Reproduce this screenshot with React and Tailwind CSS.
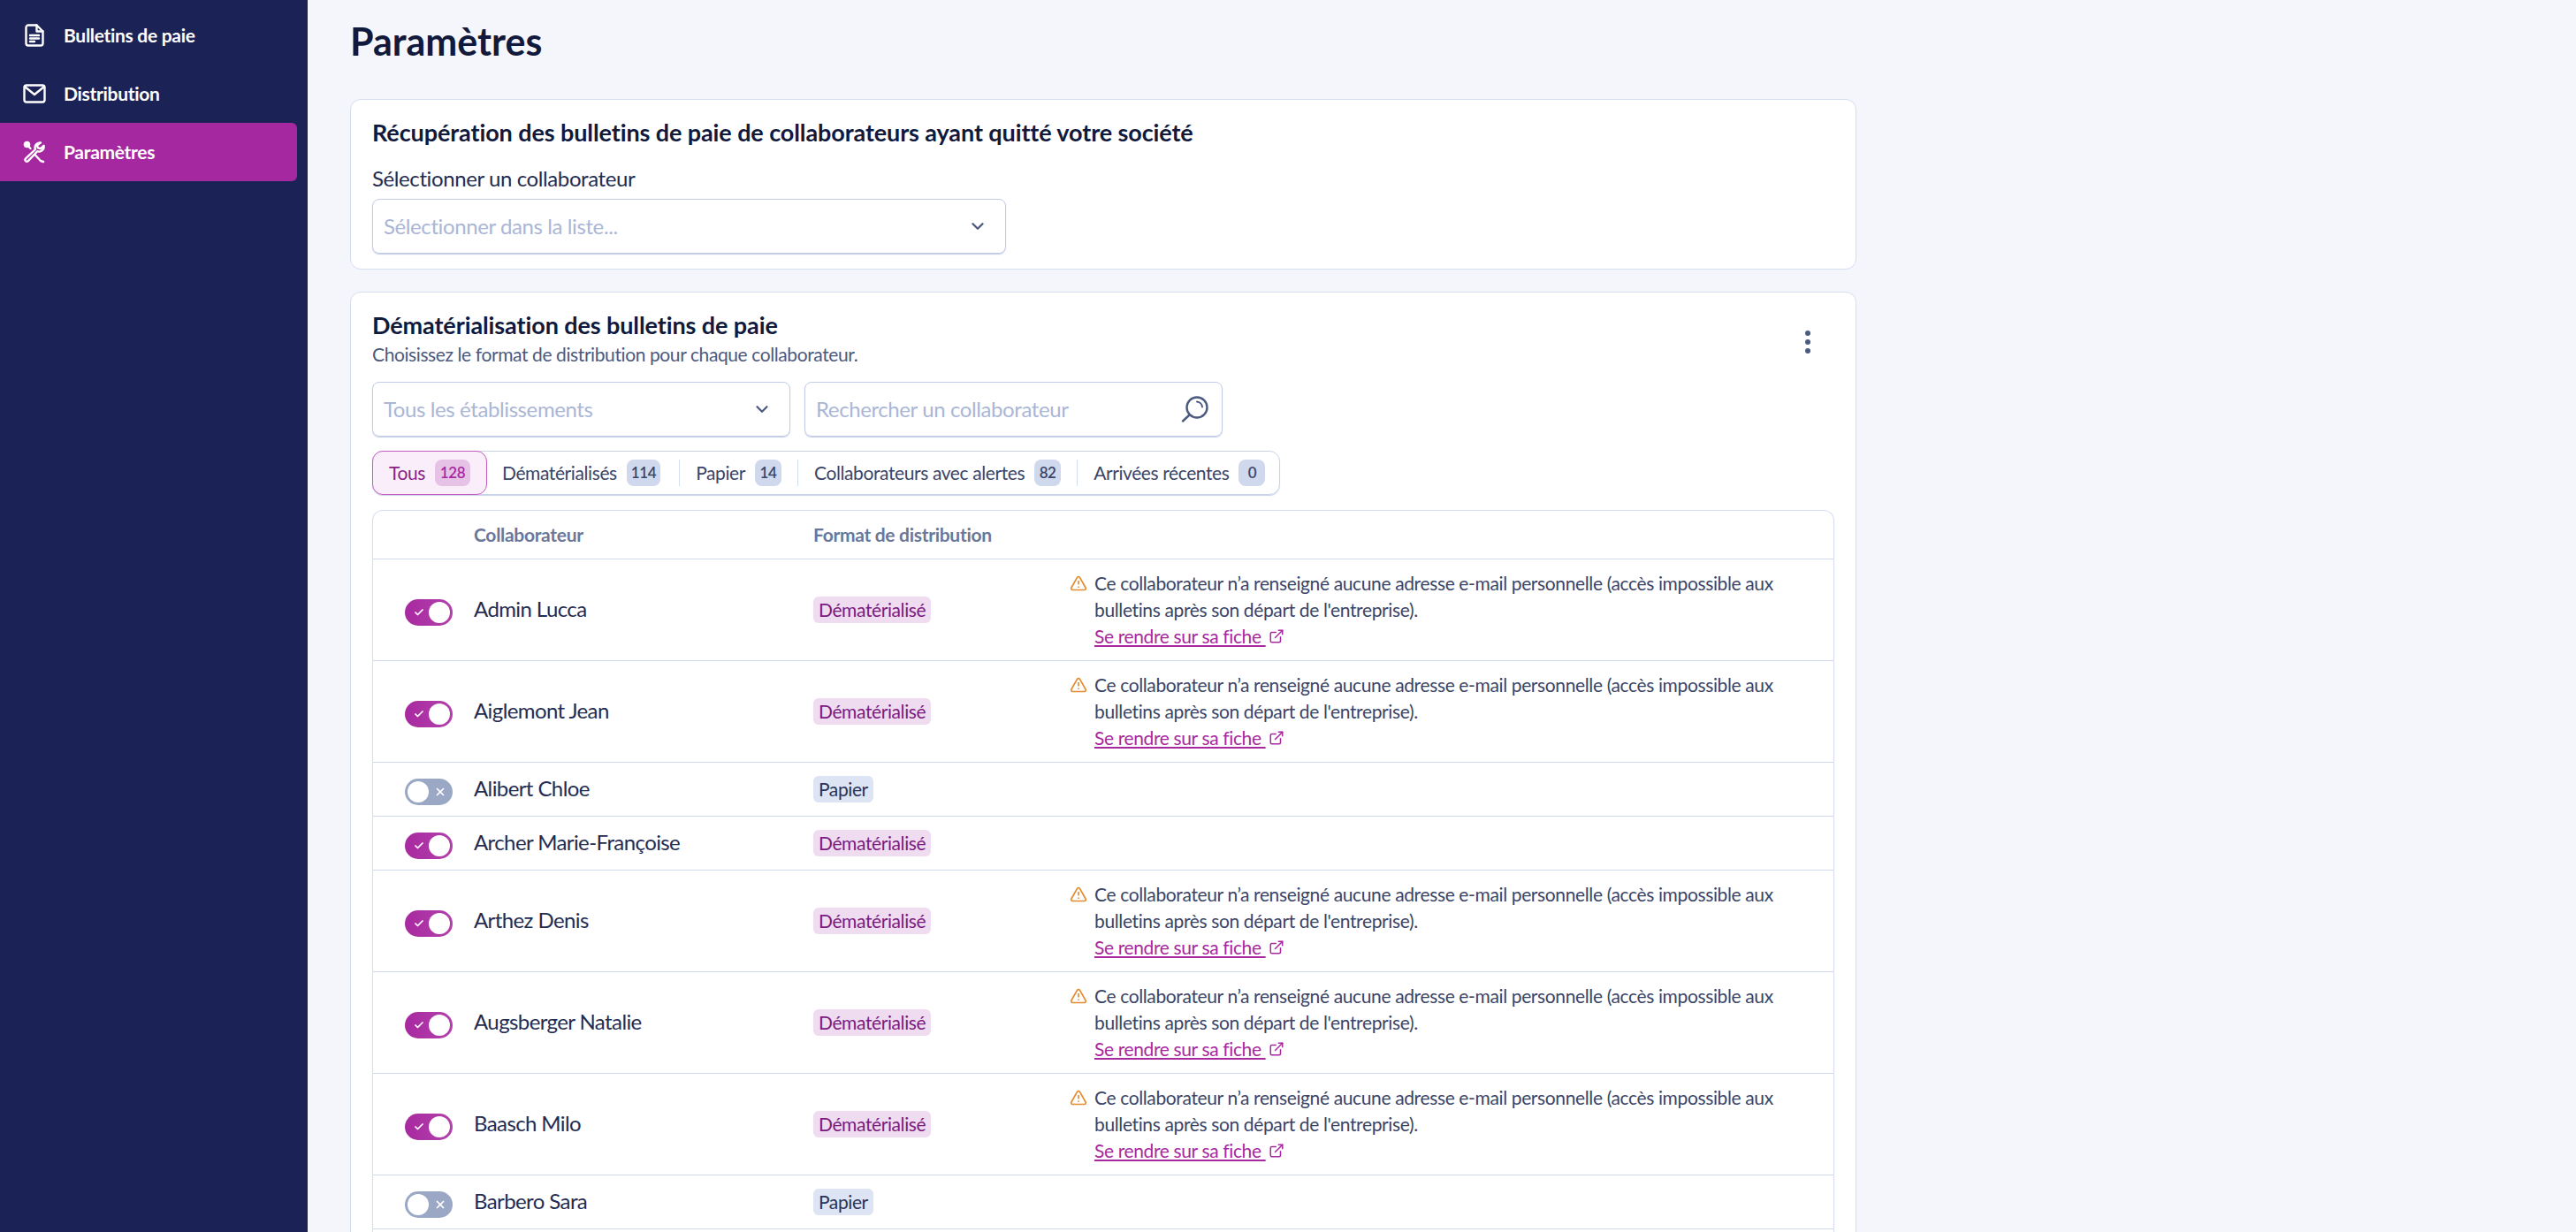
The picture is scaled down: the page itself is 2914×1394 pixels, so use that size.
import React from "react";
import { ChevronDown, TriangleAlert, ExternalLink, Check, X } from "lucide-react";

const tabs = [
  { label: "Dématérialisés", count: 114 },
  { label: "Papier", count: 14 },
  { label: "Collaborateurs avec alertes", count: 82 },
  { label: "Arrivées récentes", count: 0 },
];

const people = [
  { name: "Admin Lucca", on: true, alert: true },
  { name: "Aiglemont Jean", on: true, alert: true },
  { name: "Alibert Chloe", on: false, alert: false },
  { name: "Archer Marie-Françoise", on: true, alert: false },
  { name: "Arthez Denis", on: true, alert: true },
  { name: "Augsberger Natalie", on: true, alert: true },
  { name: "Baasch Milo", on: true, alert: true },
  { name: "Barbero Sara", on: false, alert: false },
];

const FileIcon = () => (
  <svg width="22" height="26" viewBox="0 0 22 26" fill="none" stroke="white" strokeWidth="2.4" strokeLinecap="round" strokeLinejoin="round">
    <path d="M13.5 1.5H4a2.5 2.5 0 0 0-2.500 2.500v18A2.500 2.500 0 0 0 4 24.500h14a2.500 2.500 0 0 0 2.500-2.500V8.500z" />
    <path d="M13.500 1.500v7h7" />
    <path d="M6 13h10M6 16.500h10M6 20h5" />
  </svg>
);

const MailIcon = () => (
  <svg width="26" height="22" viewBox="0 0 26 22" fill="none" stroke="white" strokeWidth="2.4" strokeLinecap="round" strokeLinejoin="round">
    <rect x="1.500" y="1.500" width="23" height="19" rx="2.500" />
    <path d="M2 3l11 9 11-9" />
  </svg>
);

const ToolsIcon = () => (
  <svg width="26" height="26" viewBox="0 0 26 26" fill="none" stroke="white" strokeWidth="2.4" strokeLinecap="round" strokeLinejoin="round">
    <path d="M20 2.500a5.500 5.500 0 0 0-6 7.500L2.800 20.600a2 2 0 0 0 2.800 2.800L16.200 12.200a5.500 5.500 0 0 0 7.300-6.400l-3.500 3.400-3.200-.9-.8-3.100z" />
    <path d="M14 16.500l6 6.500M20 23l3 1" />
    <path d="M8.500 9L5.500 6" />
    <circle cx="4.500" cy="4.500" r="2.600" fill="white" />
  </svg>
);

const SearchIcon = () => (
  <svg width="32" height="30" viewBox="0 0 32 30" fill="none" stroke="#4c5a80" strokeWidth="2.400" strokeLinecap="round">
    <circle cx="18" cy="13" r="11.500" />
    <path d="M9.500 21.500L2 28.500" />
    <path d="M18 6.500a6.500 6.500 0 0 1 6 6" strokeWidth="2" />
  </svg>
);

const Toggle = ({ on }) =>
  on ? (
    <div className="flex h-[30px] w-[54px] shrink-0 items-center justify-between rounded-full bg-gradient-to-r from-[#a828a0] to-[#b241ac] pl-[10px] pr-[3px]">
      <Check className="h-[12px] w-[12px] text-white" strokeWidth={3.5} />
      <div className="h-[24px] w-[24px] rounded-full bg-white" />
    </div>
  ) : (
    <div className="flex h-[30px] w-[54px] shrink-0 items-center justify-between rounded-full bg-[#9aa8c6] pl-[3px] pr-[7px]">
      <div className="h-[24px] w-[24px] rounded-full bg-white" />
      <X className="h-[14px] w-[14px] text-white" strokeWidth={3} />
    </div>
  );

const App = () => {
  return (
    <div className="flex h-screen overflow-hidden bg-[#f4f6fb] font-['Lato',sans-serif] text-[#232c52]">
      {/* Sidebar */}
      <div className="w-[348px] shrink-0 bg-[#1b2256] pt-[7px] pr-[12px]">
        <div className="flex h-[66px] items-center text-[21px] font-bold tracking-[-0.3px] text-white">
          <div className="flex w-[72px] justify-center pl-[5px]"><FileIcon /></div>
          Bulletins de paie
        </div>
        <div className="flex h-[66px] items-center text-[21px] font-bold tracking-[-0.3px] text-white">
          <div className="flex w-[72px] justify-center pl-[5px]"><MailIcon /></div>
          Distribution
        </div>
        <div className="flex h-[66px] items-center rounded-r-[6px] bg-[#a628a0] text-[21px] font-bold tracking-[-0.3px] text-white">
          <div className="flex w-[72px] justify-center pl-[5px]"><ToolsIcon /></div>
          Paramètres
        </div>
      </div>

      {/* Main */}
      <div className="flex-1 pl-[48px] pt-[23px]">
        <h1 className="mb-[41px] text-[43px] font-bold leading-[48px] text-[#111a3d]">Paramètres</h1>

        <div className="mb-[25px] w-[1704px] rounded-[12px] border border-[#d5ddf0] bg-white px-[24px] pb-[17px] pt-[19px]">
          <h2 className="text-[27px] font-bold leading-[36px] tracking-[-0.1px] text-[#111a3d]">
            Récupération des bulletins de paie de collaborateurs ayant quitté votre société
          </h2>
          <div className="mt-[18px] text-[24px] leading-[32px] tracking-[-0.4px]">Sélectionner un collaborateur</div>
          <div className="mt-[7px] flex h-[62px] w-[717px] items-center justify-between rounded-[8px] border border-[#c2cce6] pl-[12px] pr-[20px] shadow-[0_1px_1px_#c2cce6]">
            <span className="text-[24px] tracking-[-0.4px] text-[#aab6d6]">Sélectionner dans la liste...</span>
            <ChevronDown className="h-[22px] w-[22px] text-[#4c5a80]" strokeWidth={2.5} />
          </div>
        </div>

        <div className="w-[1704px] rounded-[12px] border border-[#d5ddf0] bg-white px-[24px] pt-[19px]">
          <div className="flex justify-between">
            <div>
              <h2 className="text-[27px] font-bold leading-[36px] tracking-[-0.1px] text-[#111a3d]">Dématérialisation des bulletins de paie</h2>
              <p className="mt-[1px] text-[21px] leading-[28px] tracking-[-0.4px] text-[#4c5a80]">Choisissez le format de distribution pour chaque collaborateur.</p>
            </div>
            <div className="mr-[27px] mt-[24px] flex flex-col gap-[4px]">
              <div className="h-[6px] w-[6px] rounded-full bg-[#4c5a80]" />
              <div className="h-[6px] w-[6px] rounded-full bg-[#4c5a80]" />
              <div className="h-[6px] w-[6px] rounded-full bg-[#4c5a80]" />
            </div>
          </div>

          <div className="mt-[17px] flex gap-[16px]">
            <div className="flex h-[62px] w-[473px] items-center justify-between rounded-[8px] border border-[#c2cce6] pl-[12px] pr-[20px] shadow-[0_1px_1px_#c2cce6]">
              <span className="text-[24px] tracking-[-0.4px] text-[#aab6d6]">Tous les établissements</span>
              <ChevronDown className="h-[22px] w-[22px] text-[#4c5a80]" strokeWidth={2.5} />
            </div>
            <div className="flex h-[62px] w-[473px] items-center justify-between rounded-[8px] border border-[#c2cce6] pl-[12px] pr-[14px] shadow-[0_1px_1px_#c2cce6]">
              <span className="text-[24px] tracking-[-0.4px] text-[#aab6d6]">Rechercher un collaborateur</span>
              <SearchIcon />
            </div>
          </div>

          <div className="mt-[16px] flex h-[50px] w-fit items-center rounded-[12px] border border-[#c8d2ea] pr-[16px] text-[21px] tracking-[-0.4px] text-[#3a4568] shadow-[0_1px_1px_#c8d2ea]">
            <div className="-ml-px flex h-[50px] items-center gap-[11px] rounded-[12px] border border-[#c65cc0] bg-[#f9eef9] pl-[18px] pr-[18px] text-[#8a1f88]">
              Tous
              <span className="flex h-[30px] w-[40px] items-center justify-center rounded-[8px] bg-[#e6c3e6] text-[17px] font-semibold text-[#a828a0]">128</span>
            </div>
            {tabs.map((tab, index) => (
              <div key={tab.label} className="flex items-center">
                {index > 0 && <div className="mx-[18px] h-[30px] w-px bg-[#d5ddf0]" />}
                <div className={index === 0 ? "flex items-center gap-[11px] pl-[17px] pr-[3px]" : "flex items-center gap-[11px]"}>
                  {tab.label}
                  <span className="flex h-[30px] min-w-[30px] items-center justify-center rounded-[8px] bg-[#cfd8ec] px-[5px] text-[17px] font-semibold text-[#3a4568]">{tab.count}</span>
                </div>
              </div>
            ))}
          </div>

          {/* Table */}
          <div className="mt-[17px] w-[1654px] rounded-t-[12px] border-x border-t border-[#d5ddf0]">
            <div className="flex h-[55px] items-center border-b border-[#d0d9ee] text-[21px] font-bold tracking-[-0.3px] text-[#6a7799]">
              <div className="ml-[114px] w-[384px]">Collaborateur</div>
              <div>Format de distribution</div>
            </div>
            {people.map((person) => (
              <div key={person.name} className="flex min-h-[61px] items-center border-b border-[#d0d9ee] py-[12px] pl-[36px]">
                <div className="mt-[6px]"><Toggle on={person.on} /></div>
                <div className="-mt-[2px] ml-[24px] w-[384px] text-[24px] leading-[30px] tracking-[-0.6px]">{person.name}</div>
                <div className="w-[290px]">
                  {person.on ? (
                    <span className="inline-block h-[30px] rounded-[6px] bg-[#f0dcf0] px-[6px] text-[21px] leading-[30px] tracking-[-0.4px] text-[#7a1a80]">Dématérialisé</span>
                  ) : (
                    <span className="inline-block h-[30px] rounded-[6px] bg-[#dde4f3] px-[6px] text-[21px] leading-[30px] tracking-[-0.4px] text-[#2a3358]">Papier</span>
                  )}
                </div>
                {person.alert && (
                  <div className="flex gap-[8px]">
                    <TriangleAlert className="mt-[5px] h-[20px] w-[20px] text-[#e58a2e]" strokeWidth={2} />
                    <div className="whitespace-nowrap text-[21px] leading-[30px] tracking-[-0.37px] text-[#3a4568]">
                      Ce collaborateur n’a renseigné aucune adresse e-mail personnelle (accès impossible aux
                      <br />
                      bulletins après son départ de l'entreprise).
                      <br />
                      <a href="#" className="inline-flex items-center gap-[3px] text-[#a828a0]">
                        <span className="underline">Se rendre sur sa fiche&nbsp;</span>
                        <ExternalLink className="h-[18px] w-[18px]" strokeWidth={2} />
                      </a>
                    </div>
                  </div>
                )}
              </div>
            ))}
            <div className="h-[40px]" />
          </div>
        </div>
      </div>
    </div>
  );
};

export default App;
